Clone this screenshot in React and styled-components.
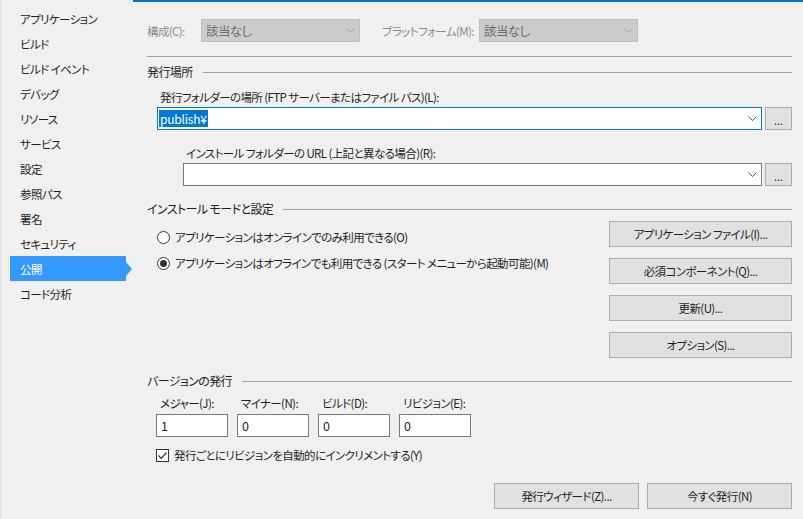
import React from "react";
import styled, { createGlobalStyle } from "styled-components";

const GlobalStyle = createGlobalStyle`
  html, body {
    margin: 0;
    padding: 0;
    background: #f0f0f0;
  }
  body {
    font-family: "Noto Sans CJK JP", "Noto Sans", sans-serif;
    font-size: 11.5px;
    letter-spacing: -0.6px;
    line-height: 16px;
    color: #1e1e1e;
    font-feature-settings: "palt";
    white-space: nowrap;
  }
`;

const Page = styled.div`
  display: flex;
  width: 803px;
  height: 519px;
  overflow: hidden;
  background: #f0f0f0;
`;

const Sidebar = styled.ul`
  width: 133px;
  flex: none;
  margin: 0;
  padding: 6px 0 0 0;
  list-style: none;
  border-left: 1px solid #e2e2e2;
  box-sizing: border-box;
`;

const NavItem = styled.li`
  position: relative;
  height: 25px;
  width: 116px;
  margin-left: 9px;
  padding-left: 10px;
  box-sizing: border-box;
  display: flex;
  align-items: center;
  background: ${(p) => (p.$active ? "#3399ff" : "transparent")};
  color: ${(p) => (p.$active ? "#ffffff" : "#1e1e1e")};

  ${(p) =>
    p.$active &&
    `
    &::after {
      content: "";
      position: absolute;
      right: -6px;
      top: 50%;
      transform: translateY(-50%);
      border-left: 6px solid #3399ff;
      border-top: 7px solid transparent;
      border-bottom: 7px solid transparent;
    }
  `}
`;

const Main = styled.div`
  flex: 1;
  border-top: 2px solid #0e70c0;
  padding: 17px 11px 0 14px;
  display: flex;
  flex-direction: column;
  box-sizing: border-box;
`;

const TopRow = styled.div`
  display: flex;
  align-items: center;
  height: 23px;
`;

const DimLabel = styled.span`
  color: #8c8c8c;
  width: ${(p) => p.$w}px;
  margin-left: ${(p) => p.$ml || 0}px;
  flex: none;
`;

const DisabledCombo = styled.div`
  width: 159px;
  height: 23px;
  box-sizing: border-box;
  background: #cccccc;
  border: 1px solid #bfbfbf;
  color: #6d6d6d;
  display: flex;
  align-items: center;
  justify-content: space-between;
  padding: 0 4px 0 4px;
  font-size: 12.5px;
`;

const Rule = styled.div`
  height: 1px;
  background: #a0a0a0;
  margin-top: ${(p) => p.$mt || 0}px;
`;

const SectionHeader = styled.div`
  display: flex;
  align-items: center;
  gap: 10px;
  height: 16px;
  margin-top: ${(p) => p.$mt}px;
  font-size: 12px;

  &::after {
    content: "";
    flex: 1;
    height: 1px;
    background: #a0a0a0;
  }
`;

const FieldLabel = styled.div`
  height: 16px;
  margin-top: ${(p) => p.$mt}px;
  padding-left: ${(p) => p.$pl}px;
`;

const InputRow = styled.div`
  display: flex;
  gap: 3px;
  height: 23px;
  margin-top: 2px;
  padding-left: ${(p) => p.$pl}px;
`;

const ComboInput = styled.div`
  flex: 1;
  box-sizing: border-box;
  background: #fff;
  border: 1px solid ${(p) => (p.$focused ? "#0078d7" : "#7a7a7a")};
  display: flex;
  align-items: center;
  justify-content: space-between;
  padding: 0 4px 0 1px;
`;

const Selected = styled.span`
  background: #0078d7;
  color: #fff;
  font-size: 12px;
  letter-spacing: -0.2px;
  line-height: 17px;
  padding: 0 1px;
`;

const BrowseButton = styled.div`
  width: 27px;
  flex: none;
  box-sizing: border-box;
  background: #e1e1e1;
  border: 1px solid #adadad;
  display: flex;
  justify-content: center;
  align-items: flex-end;
  padding-bottom: 3px;
  font-size: 11px;
  line-height: 11px;
  letter-spacing: 0;
`;

const InstallArea = styled.div`
  display: flex;
  justify-content: space-between;
  margin-top: 4px;
`;

const RadioGroup = styled.div`
  display: flex;
  flex-direction: column;
  gap: 10px;
  padding: 8px 0 0 10px;
`;

const OptionRow = styled.label`
  display: flex;
  align-items: center;
  height: 16px;
  gap: 5px;
`;

const RadioCircle = styled.span`
  width: 13px;
  height: 13px;
  box-sizing: border-box;
  border-radius: 50%;
  border: 1px solid #333;
  background: #fff;
  display: flex;
  align-items: center;
  justify-content: center;
  flex: none;

  &::after {
    content: "";
    width: 7px;
    height: 7px;
    border-radius: 50%;
    background: ${(p) => (p.$checked ? "#333" : "transparent")};
  }
`;

const CheckBox = styled.span`
  width: 13px;
  height: 13px;
  box-sizing: border-box;
  border: 1px solid #333;
  background: #fff;
  display: flex;
  align-items: center;
  justify-content: center;
  flex: none;
`;

const ButtonColumn = styled.div`
  display: flex;
  flex-direction: column;
  gap: 11px;
  width: 183px;
`;

const Button = styled.div`
  height: 26px;
  width: ${(p) => (p.$w ? `${p.$w}px` : "auto")};
  box-sizing: border-box;
  background: #e1e1e1;
  border: 1px solid #adadad;
  display: flex;
  align-items: center;
  justify-content: center;
`;

const VersionGrid = styled.div`
  display: grid;
  grid-template-columns: repeat(4, 72px);
  column-gap: 9px;
  padding-left: 9px;
  margin-top: 6px;
`;

const VersionLabel = styled.div`
  height: 16px;
  padding-left: 4px;
`;

const VersionInput = styled.div`
  height: 23px;
  margin-top: 3px;
  box-sizing: border-box;
  border: 1px solid #7a7a7a;
  background: #fff;
  display: flex;
  align-items: center;
  padding-left: 4px;
  font-size: 12.5px;
`;

const CheckRow = styled(OptionRow)`
  margin-top: 10px;
  padding-left: 9px;
`;

const Footer = styled.div`
  display: flex;
  justify-content: flex-end;
  gap: 8px;
  margin-top: 20px;
`;

const Chevron = ({ color }) => (
  <svg width="9" height="5" viewBox="0 0 9 5">
    <polyline points="0.5,0.5 4.5,4.5 8.5,0.5" fill="none" stroke={color} strokeWidth="1" />
  </svg>
);

const navItems = [
  "アプリケーション",
  "ビルド",
  "ビルド イベント",
  "デバッグ",
  "リソース",
  "サービス",
  "設定",
  "参照パス",
  "署名",
  "セキュリティ",
  "公開",
  "コード分析",
];

const versions = [
  ["メジャー(J):", "1"],
  ["マイナー(N):", "0"],
  ["ビルド(D):", "0"],
  ["リビジョン(E):", "0"],
];

export default function App() {
  return (
    <>
      <GlobalStyle />
      <Page>
        <Sidebar>
          {navItems.map((item) => (
            <NavItem key={item} $active={item === "公開"}>
              {item}
            </NavItem>
          ))}
        </Sidebar>
        <Main>
          <TopRow>
            <DimLabel $w={54}>構成(C):</DimLabel>
            <DisabledCombo>
              該当なし
              <Chevron color="#a0a0a0" />
            </DisabledCombo>
            <DimLabel $w={97} $ml={22}>
              プラットフォーム(M):
            </DimLabel>
            <DisabledCombo>
              該当なし
              <Chevron color="#a0a0a0" />
            </DisabledCombo>
          </TopRow>
          <Rule $mt={14} />

          <SectionHeader $mt={7}>発行場所</SectionHeader>
          <FieldLabel $mt={9} $pl={13}>
            発行フォルダーの場所 (FTP サーバーまたはファイル パス)(L):
          </FieldLabel>
          <InputRow $pl={10}>
            <ComboInput $focused>
              <Selected>publish¥</Selected>
              <Chevron color="#555" />
            </ComboInput>
            <BrowseButton>...</BrowseButton>
          </InputRow>
          <FieldLabel $mt={15} $pl={39}>
            インストール フォルダーの URL (上記と異なる場合)(R):
          </FieldLabel>
          <InputRow $pl={36}>
            <ComboInput>
              <span />
              <Chevron color="#555" />
            </ComboInput>
            <BrowseButton>...</BrowseButton>
          </InputRow>

          <SectionHeader $mt={15}>インストール モードと設定</SectionHeader>
          <InstallArea>
            <RadioGroup>
              <OptionRow>
                <RadioCircle />
                アプリケーションはオンラインでのみ利用できる(O)
              </OptionRow>
              <OptionRow>
                <RadioCircle $checked />
                アプリケーションはオフラインでも利用できる (スタート メニューから起動可能)(M)
              </OptionRow>
            </RadioGroup>
            <ButtonColumn>
              <Button>アプリケーション ファイル(I)...</Button>
              <Button>必須コンポーネント(Q)...</Button>
              <Button>更新(U)...</Button>
              <Button>オプション(S)...</Button>
            </ButtonColumn>
          </InstallArea>

          <SectionHeader $mt={15}>バージョンの発行</SectionHeader>
          <VersionGrid>
            {versions.map(([label]) => (
              <VersionLabel key={label}>{label}</VersionLabel>
            ))}
            {versions.map(([label, value]) => (
              <VersionInput key={label + "v"}>{value}</VersionInput>
            ))}
          </VersionGrid>
          <CheckRow>
            <CheckBox>
              <svg width="11" height="11" viewBox="0 0 11 11">
                <polyline points="1.5,5.5 4.2,8.3 9.5,2.5" fill="none" stroke="#333" strokeWidth="1.2" />
              </svg>
            </CheckBox>
            発行ごとにリビジョンを自動的にインクリメントする(Y)
          </CheckRow>

          <Footer>
            <Button $w={145}>発行ウィザード(Z)...</Button>
            <Button $w={145}>今すぐ発行(N)</Button>
          </Footer>
        </Main>
      </Page>
    </>
  );
}
